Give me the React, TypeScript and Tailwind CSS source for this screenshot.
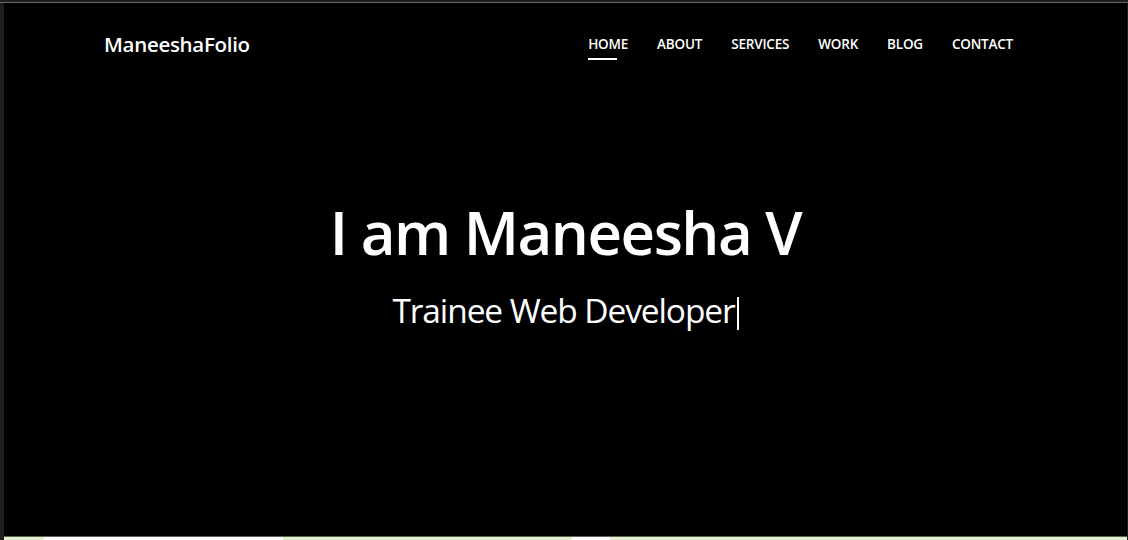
import React from 'react';

const links = ['HOME', 'ABOUT', 'SERVICES', 'WORK', 'BLOG', 'CONTACT'];

// bottom strip segments of the window below the page
const strip = [
  { w: 'w-[40px]', c: 'bg-[#e3efd2]' },
  { w: 'w-[239px]', c: 'bg-white' },
  { w: 'w-[289px]', c: 'bg-[#e3efd2]' },
  { w: 'w-[38px]', c: 'bg-white' },
  { w: 'flex-1', c: 'bg-[#e3efd2]' },
];

const App: React.FC = () => {
  return (
    <div
      className="w-[1128px] h-[540px] bg-[#1e1e1e] pt-[2px] pl-[4px] pr-[1px] flex flex-col overflow-hidden"
      style={{ fontFamily: '"Open Sans", "Noto Sans", Arial, sans-serif' }}
    >
      <div className="h-px bg-[#6b6b6b] -ml-[4px] -mr-[1px]" />
      <main className="flex-1 bg-black flex flex-col text-white">
        {/* Header */}
        <header className="h-[82px] flex items-center justify-between pl-[100px] pr-[114px]">
          <a href="#" className="text-[20.5px] font-semibold tracking-[-0.3px]">
            ManeeshaFolio
          </a>
          <nav className="flex items-center gap-[29px] pt-[1px]">
            {links.map((l, i) => (
              <a key={l} href="#" className="relative text-[13.5px] font-semibold tracking-[-0.2px]">
                {l}
                {i === 0 && (
                  <span className="absolute left-0 top-[24px] h-[2px] w-[29px] bg-white" />
                )}
              </a>
            ))}
          </nav>
        </header>

        {/* Hero */}
        <section className="flex flex-col items-center pt-[107px]">
          <h1 className="text-[60px] leading-[80px] font-semibold tracking-[-1.5px]">I am Maneesha V</h1>
          <p className="mt-[13px] text-[33.5px] leading-[50px] font-normal tracking-[-1.1px] flex items-center">
            Trainee Web Developer
            <span className="ml-[2px] inline-block w-[2px] h-[33px] bg-white translate-y-[3px]" />
          </p>
        </section>
      </main>
      <div className="h-px bg-[#5b6352]" />
      <div className="h-[3px] flex">
        {strip.map((s, i) => (
          <div key={i} className={`${s.w} ${s.c}`} />
        ))}
      </div>
    </div>
  );
};

export default App;
